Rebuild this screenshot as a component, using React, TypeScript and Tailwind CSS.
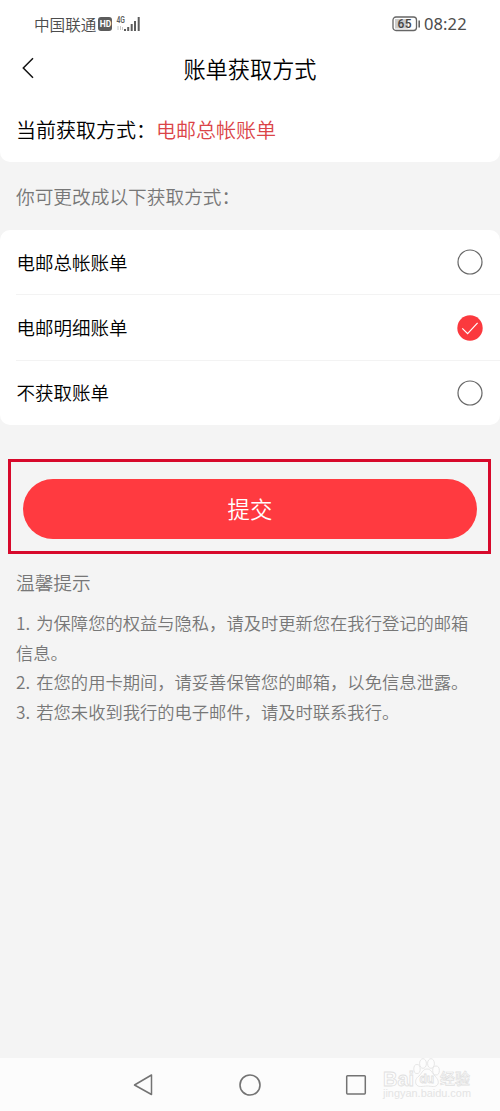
import React from "react";

const options = [
  { label: "电邮总帐账单", checked: false },
  { label: "电邮明细账单", checked: true },
  { label: "不获取账单", checked: false },
];

function StatusBar() {
  return (
    <div className="flex h-[46px] items-center pl-[34px] pr-[33px] pt-[2px] text-[#4c4c4c]">
      <span className="mt-[-1px] text-[15.6px] leading-[20px]">中国联通</span>
      <span className="ml-[2px] flex h-[14px] w-[14px] items-center justify-center rounded-[3px] bg-[#5c5c5c] font-['Roboto',sans-serif] text-[8.5px] leading-none font-bold text-white">
        HD
      </span>
      <svg className="ml-[4px]" width="26" height="18" viewBox="0 0 26 18">
        <text x="0.5" y="8" fontSize="8.5" fontWeight="600" textLength="8.5" lengthAdjust="spacingAndGlyphs" fontFamily="Roboto, sans-serif" fill="#5c5c5c">4G</text>
        <path d="M2 11v4M4.500 11v4M6.500 12v3" stroke="#c8c8c8" strokeWidth="1" />
        <path d="M9 14v2M12.200 12v4M15.700 9v7M19 6v10M22.700 2v14" stroke="#5c5c5c" strokeWidth="2" />
      </svg>
      <div className="ml-auto flex items-center">
        <svg width="29" height="16" viewBox="0 0 29 16">
          <rect x="1" y="1" width="23.500" height="13.500" rx="3" fill="#fff" stroke="#666" strokeWidth="1.300" />
          <path d="M3 3h13v9.500H3z" fill="#ccc" />
          <path d="M27.200 4.500v7" stroke="#666" strokeWidth="1.600" />
          <text x="5.500" y="12" fontSize="12" fontWeight="500" textLength="14" fontFamily="Roboto, sans-serif" fill="#444">65</text>
        </svg>
        <span className="ml-[3px] w-[43px] whitespace-nowrap font-['Noto_Sans',sans-serif] text-[16.500px] leading-[20px] font-normal tracking-[0.100px]">08:22</span>
      </div>
    </div>
  );
}

function Radio({ checked }: { checked: boolean }) {
  return (
    <svg width="26" height="26" viewBox="0 0 26 26" fill="none">
      {checked ? (
        <>
          <circle cx="13" cy="13" r="12.700" fill="#fb393e" />
          <path d="M5.300 13.300l5.300 5.300 10-10.700" stroke="#fff" strokeWidth="1.200" />
        </>
      ) : (
        <circle cx="13" cy="13" r="12" stroke="#666" strokeWidth="1.200" />
      )}
    </svg>
  );
}

function Watermark() {
  return (
    <svg className="absolute top-[-3px] left-[380px]" width="96" height="48" viewBox="0 0 96 48" stroke="#e0e0e0" strokeWidth="0.800" fill="#fdfdfd">
      <text x="3" y="30.500" fontSize="20" fontWeight="700" textLength="31" lengthAdjust="spacingAndGlyphs" fontFamily="Liberation Sans, sans-serif">Bai</text>
      <ellipse cx="37" cy="14" rx="3.200" ry="4.500" />
      <ellipse cx="43" cy="8.500" rx="3.400" ry="4.800" />
      <ellipse cx="51" cy="8.500" rx="3.400" ry="4.800" />
      <ellipse cx="56" cy="15.500" rx="3.300" ry="4.500" />
      <path d="M47 14c-4 0-5 4-8 7-3 2-4 5-3 8 2 4 7 2 11 2s9 2 11-2c1-3-1-6-3-8-3-3-4-7-8-7z" />
      <text x="39.500" y="28" fontSize="12" fontWeight="700" fontFamily="Liberation Sans, sans-serif">du</text>
      <text x="60" y="29" fontSize="15" fontWeight="500" strokeWidth="0.700" fontFamily="Noto Sans CJK SC, sans-serif">经验</text>
      <text x="3" y="42" fontSize="10" strokeWidth="0" fill="#e4e4e4" textLength="88" lengthAdjust="spacingAndGlyphs" fontFamily="Liberation Sans, sans-serif">jingyan.baidu.com</text>
    </svg>
  );
}

export default function App() {
  return (
    <div lang="zh-CN" className="flex h-[1111px] w-[500px] flex-col overflow-hidden bg-[#f4f4f4] font-['Noto_Sans_CJK_SC',sans-serif] font-[350] text-black">
      <header className="h-[162px] rounded-b-[10px] bg-white">
        <StatusBar />
        <div className="grid h-[44px] grid-cols-[100px_1fr_100px] items-center">
          <svg className="ml-[22px]" width="12" height="22" viewBox="0 0 12 22" fill="none">
            <path d="M11 1.300L1.300 11 11 20.700" stroke="#111" strokeWidth="1.500" />
          </svg>
          <h1 className="text-center text-[22.200px] leading-[30px]">账单获取方式</h1>
        </div>
        <p className="mt-[25px] pl-[16px] text-[20px] leading-[30px]">
          当前获取方式：<span className="text-[#db4448]">电邮总帐账单</span>
        </p>
      </header>

      <p className="flex h-[67px] items-center pl-[16px] text-[18.700px] leading-[28px] text-[#777]">你可更改成以下获取方式：</p>

      <ul className="mt-px rounded-[10px] bg-white">
        {options.map((o, i) => (
          <li key={o.label} className="flex flex-col">
            {i > 0 && <span className="ml-[16px] h-px bg-[#f3f3f3]" />}
            <div className="flex h-[64.400px] items-center justify-between pr-[17.500px] pl-[16.500px]">
              <span className="mt-[-1px] text-[18.500px] leading-[28px]">{o.label}</span>
              <Radio checked={o.checked} />
            </div>
          </li>
        ))}
      </ul>

      <div className="mt-[33.800px] mr-[9px] ml-[8px] h-[95px] border-[3px] border-[#d7092b] pt-[17px] pr-[11px] pl-[12px]">
        <button className="flex h-[60px] w-full items-center justify-center rounded-full bg-[#ff3a40] pb-[2px] text-[22.400px] leading-[30px] text-white">
          提交
        </button>
      </div>

      <section className="px-[16px] pt-[14px] text-[#777]">
        <h2 className="text-[18.700px] leading-[28px]">温馨提示</h2>
        <ol className="mt-[12px] text-[17.300px] leading-[29.700px] whitespace-nowrap [word-spacing:2.300px]">
          <li>1. 为保障您的权益与隐私，请及时更新您在我行登记的邮箱<br />信息。</li>
          <li>2. 在您的用卡期间，请妥善保管您的邮箱，以免信息泄露。</li>
          <li>3. 若您未收到我行的电子邮件，请及时联系我行。</li>
        </ol>
      </section>

      <nav className="relative mt-auto h-[53px] bg-[#fcfcfc]">
        <div className="flex h-full items-center justify-between pr-[133px] pl-[132px]">
          <svg width="22" height="24" viewBox="0 0 22 24" fill="none" stroke="#737373" strokeWidth="1.500" strokeLinejoin="round">
            <path d="M19.500 2v19.500L2.500 12z" />
          </svg>
          <svg width="24" height="24" viewBox="0 0 24 24" fill="none" stroke="#737373" strokeWidth="1.600">
            <circle cx="12" cy="12" r="10" />
          </svg>
          <svg width="22" height="22" viewBox="0 0 22 22" fill="none" stroke="#737373" strokeWidth="1.500">
            <rect x="1.700" y="1.700" width="18.600" height="18.200" rx="0.800" />
          </svg>
        </div>
        <Watermark />
      </nav>
    </div>
  );
}
